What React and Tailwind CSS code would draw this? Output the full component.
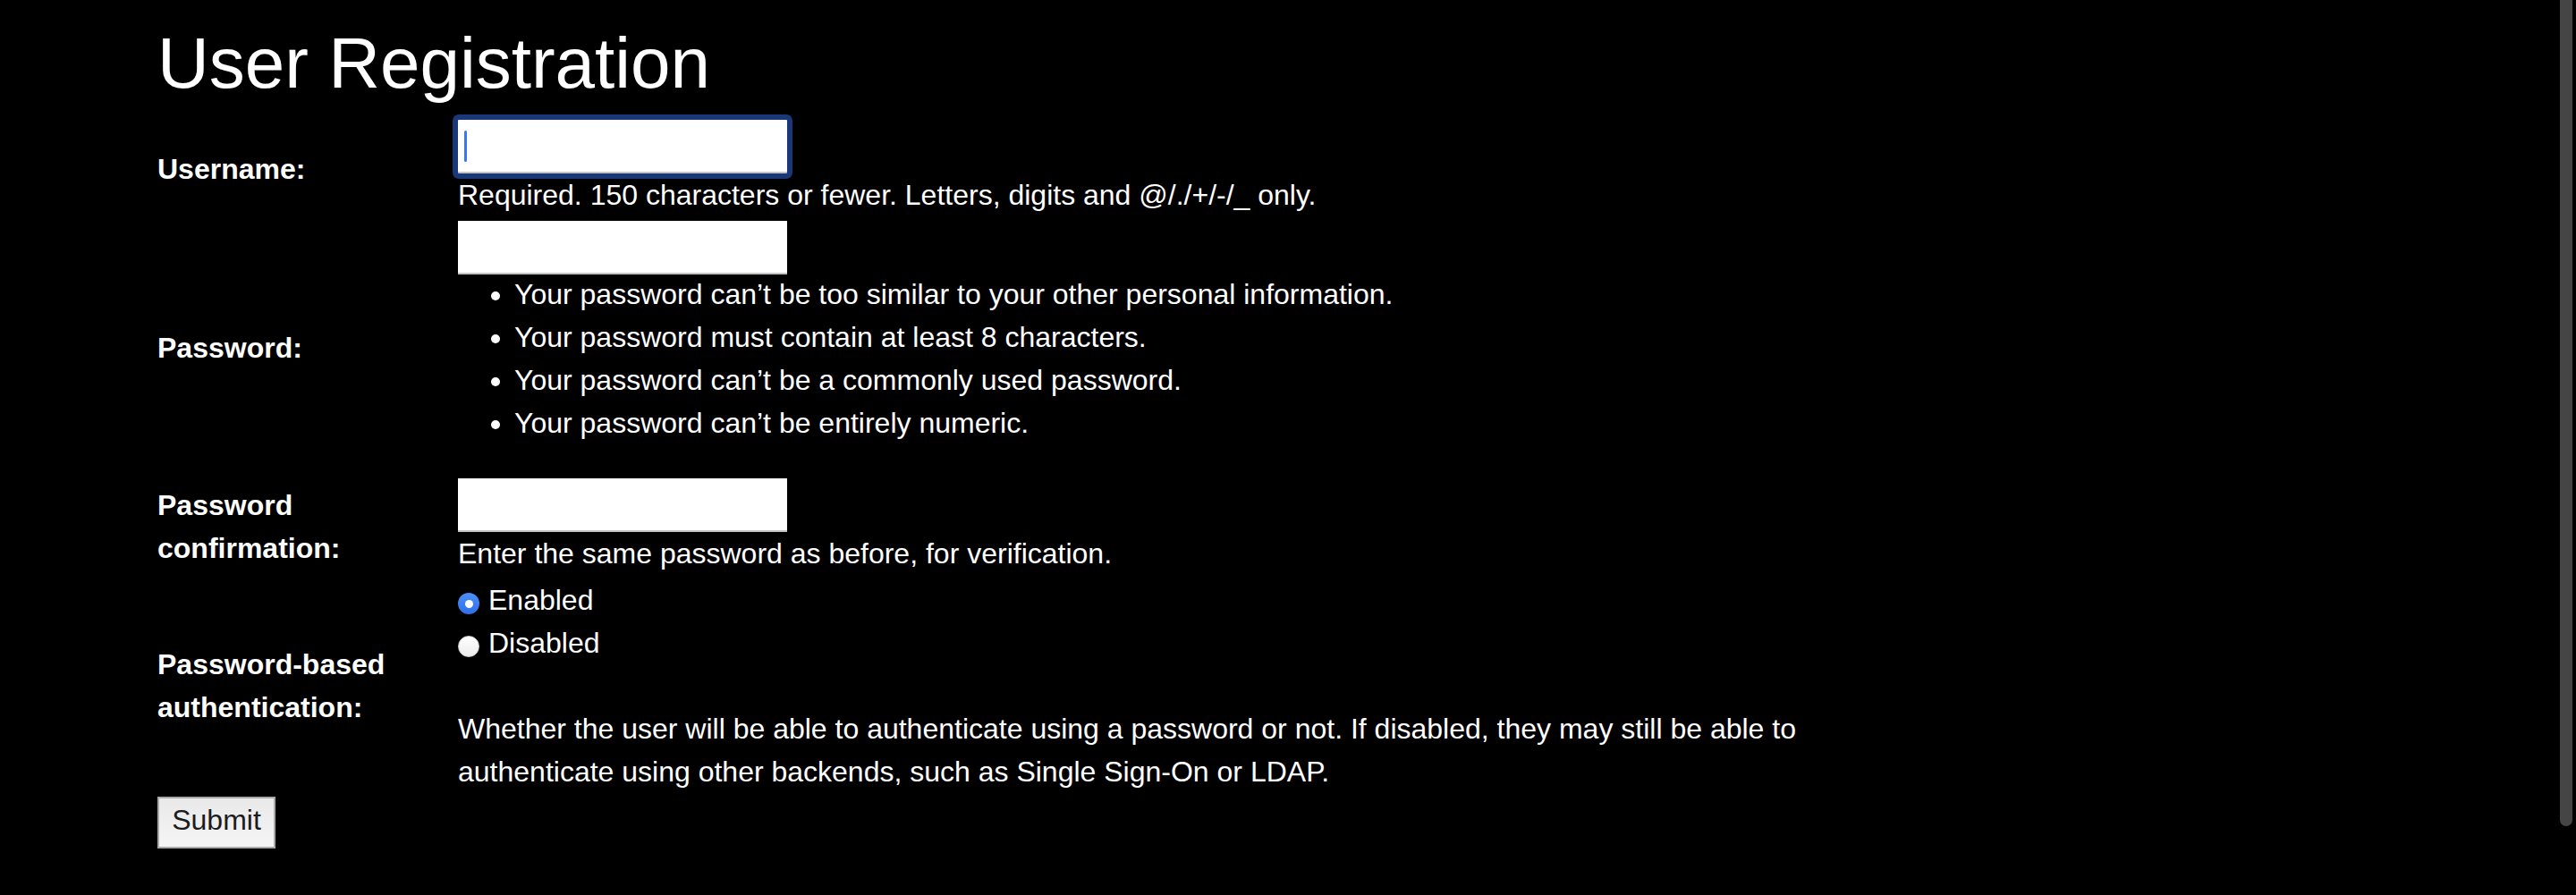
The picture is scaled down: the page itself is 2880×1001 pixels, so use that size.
import React, { PureComponent } from 'react';

class App extends PureComponent {
    render() {
        return (
            <div className="relative h-screen overflow-hidden bg-black text-white font-['Liberation_Sans',Arial,sans-serif] pl-[176px] pt-[25px]">
                <h1 className="text-[80px] leading-[92px] font-normal m-0">User Registration</h1>

                <form className="mt-[17px]">
                    <div className="grid grid-cols-[336px_1560px] gap-y-[4px] text-[32px] leading-[48px]">
                        {/* username */}
                        <label className="self-center font-bold">Username:</label>
                        <div className="pb-[1px]">
                            <div className="relative w-[368px] h-[60px]">
                                <input
                                    type="text"
                                    className="block w-[368px] h-[60px] bg-white border-0 border-b-2 border-[#c4c4c4] text-black outline-none"
                                />
                                <span className="pointer-events-none absolute -inset-[6px] rounded-[7px] border-[6px] border-[#1a3877]"></span>
                                <span className="pointer-events-none absolute left-[7px] top-[12px] w-[3px] h-[35px] rounded-full bg-[#3478f6]"></span>
                            </div>
                            <span className="block">Required. 150 characters or fewer. Letters, digits and @/./+/-/_ only.</span>
                        </div>

                        {/* password */}
                        <label className="self-center font-bold">Password:</label>
                        <div>
                            <input
                                type="password"
                                className="block w-[368px] h-[60px] bg-white border-0 border-b-2 border-[#c4c4c4] text-black outline-none"
                            />
                            <ul className="list-disc pl-[63px] mb-[34px] -mt-[2px]">
                                <li>Your password can’t be too similar to your other personal information.</li>
                                <li>Your password must contain at least 8 characters.</li>
                                <li>Your password can’t be a commonly used password.</li>
                                <li>Your password can’t be entirely numeric.</li>
                            </ul>
                        </div>

                        {/* confirmation */}
                        <label className="self-center font-bold">Password confirmation:</label>
                        <div>
                            <input
                                type="password"
                                className="block w-[368px] h-[60px] bg-white border-0 border-b-2 border-[#c4c4c4] text-black outline-none"
                            />
                            <span className="block">Enter the same password as before, for verification.</span>
                        </div>

                        {/* password based auth */}
                        <label className="self-center font-bold">Password-based authentication:</label>
                        <div>
                            <div className="flex items-center">
                                <span className="mt-[8px] flex items-center justify-center w-[24px] h-[24px] rounded-full bg-gradient-to-b from-[#4c8ff7] to-[#2f6fe8]">
                                    <span className="w-[9px] h-[9px] rounded-full bg-white"></span>
                                </span>
                                <span className="ml-[10px]">Enabled</span>
                            </div>
                            <div className="flex items-center">
                                <span className="mt-[8px] w-[24px] h-[24px] rounded-full bg-gradient-to-b from-[#ffffff] to-[#ececec] border border-[#d0d0d0]"></span>
                                <span className="ml-[10px]">Disabled</span>
                            </div>
                            <span className="block mt-[48px]">Whether the user will be able to authenticate using a password or not. If disabled, they may still be able to authenticate using other backends, such as Single Sign-On or LDAP.</span>
                        </div>
                    </div>

                    <button
                        type="button"
                        className="mt-[4px] flex items-center justify-center w-[132px] h-[58px] pb-[6px] border-2 border-[#a9a9a9] bg-gradient-to-b from-[#e9e9e9] to-[#f5f5f5] text-[#1c1c1c] text-[32px] leading-[37px]"
                    >
                        Submit
                    </button>
                </form>

                <div className="pointer-events-none fixed right-[4px] -top-[10px] w-[14px] h-[934px] rounded-full bg-[#454545]"></div>
            </div>
        );
    }
}

export default App;
